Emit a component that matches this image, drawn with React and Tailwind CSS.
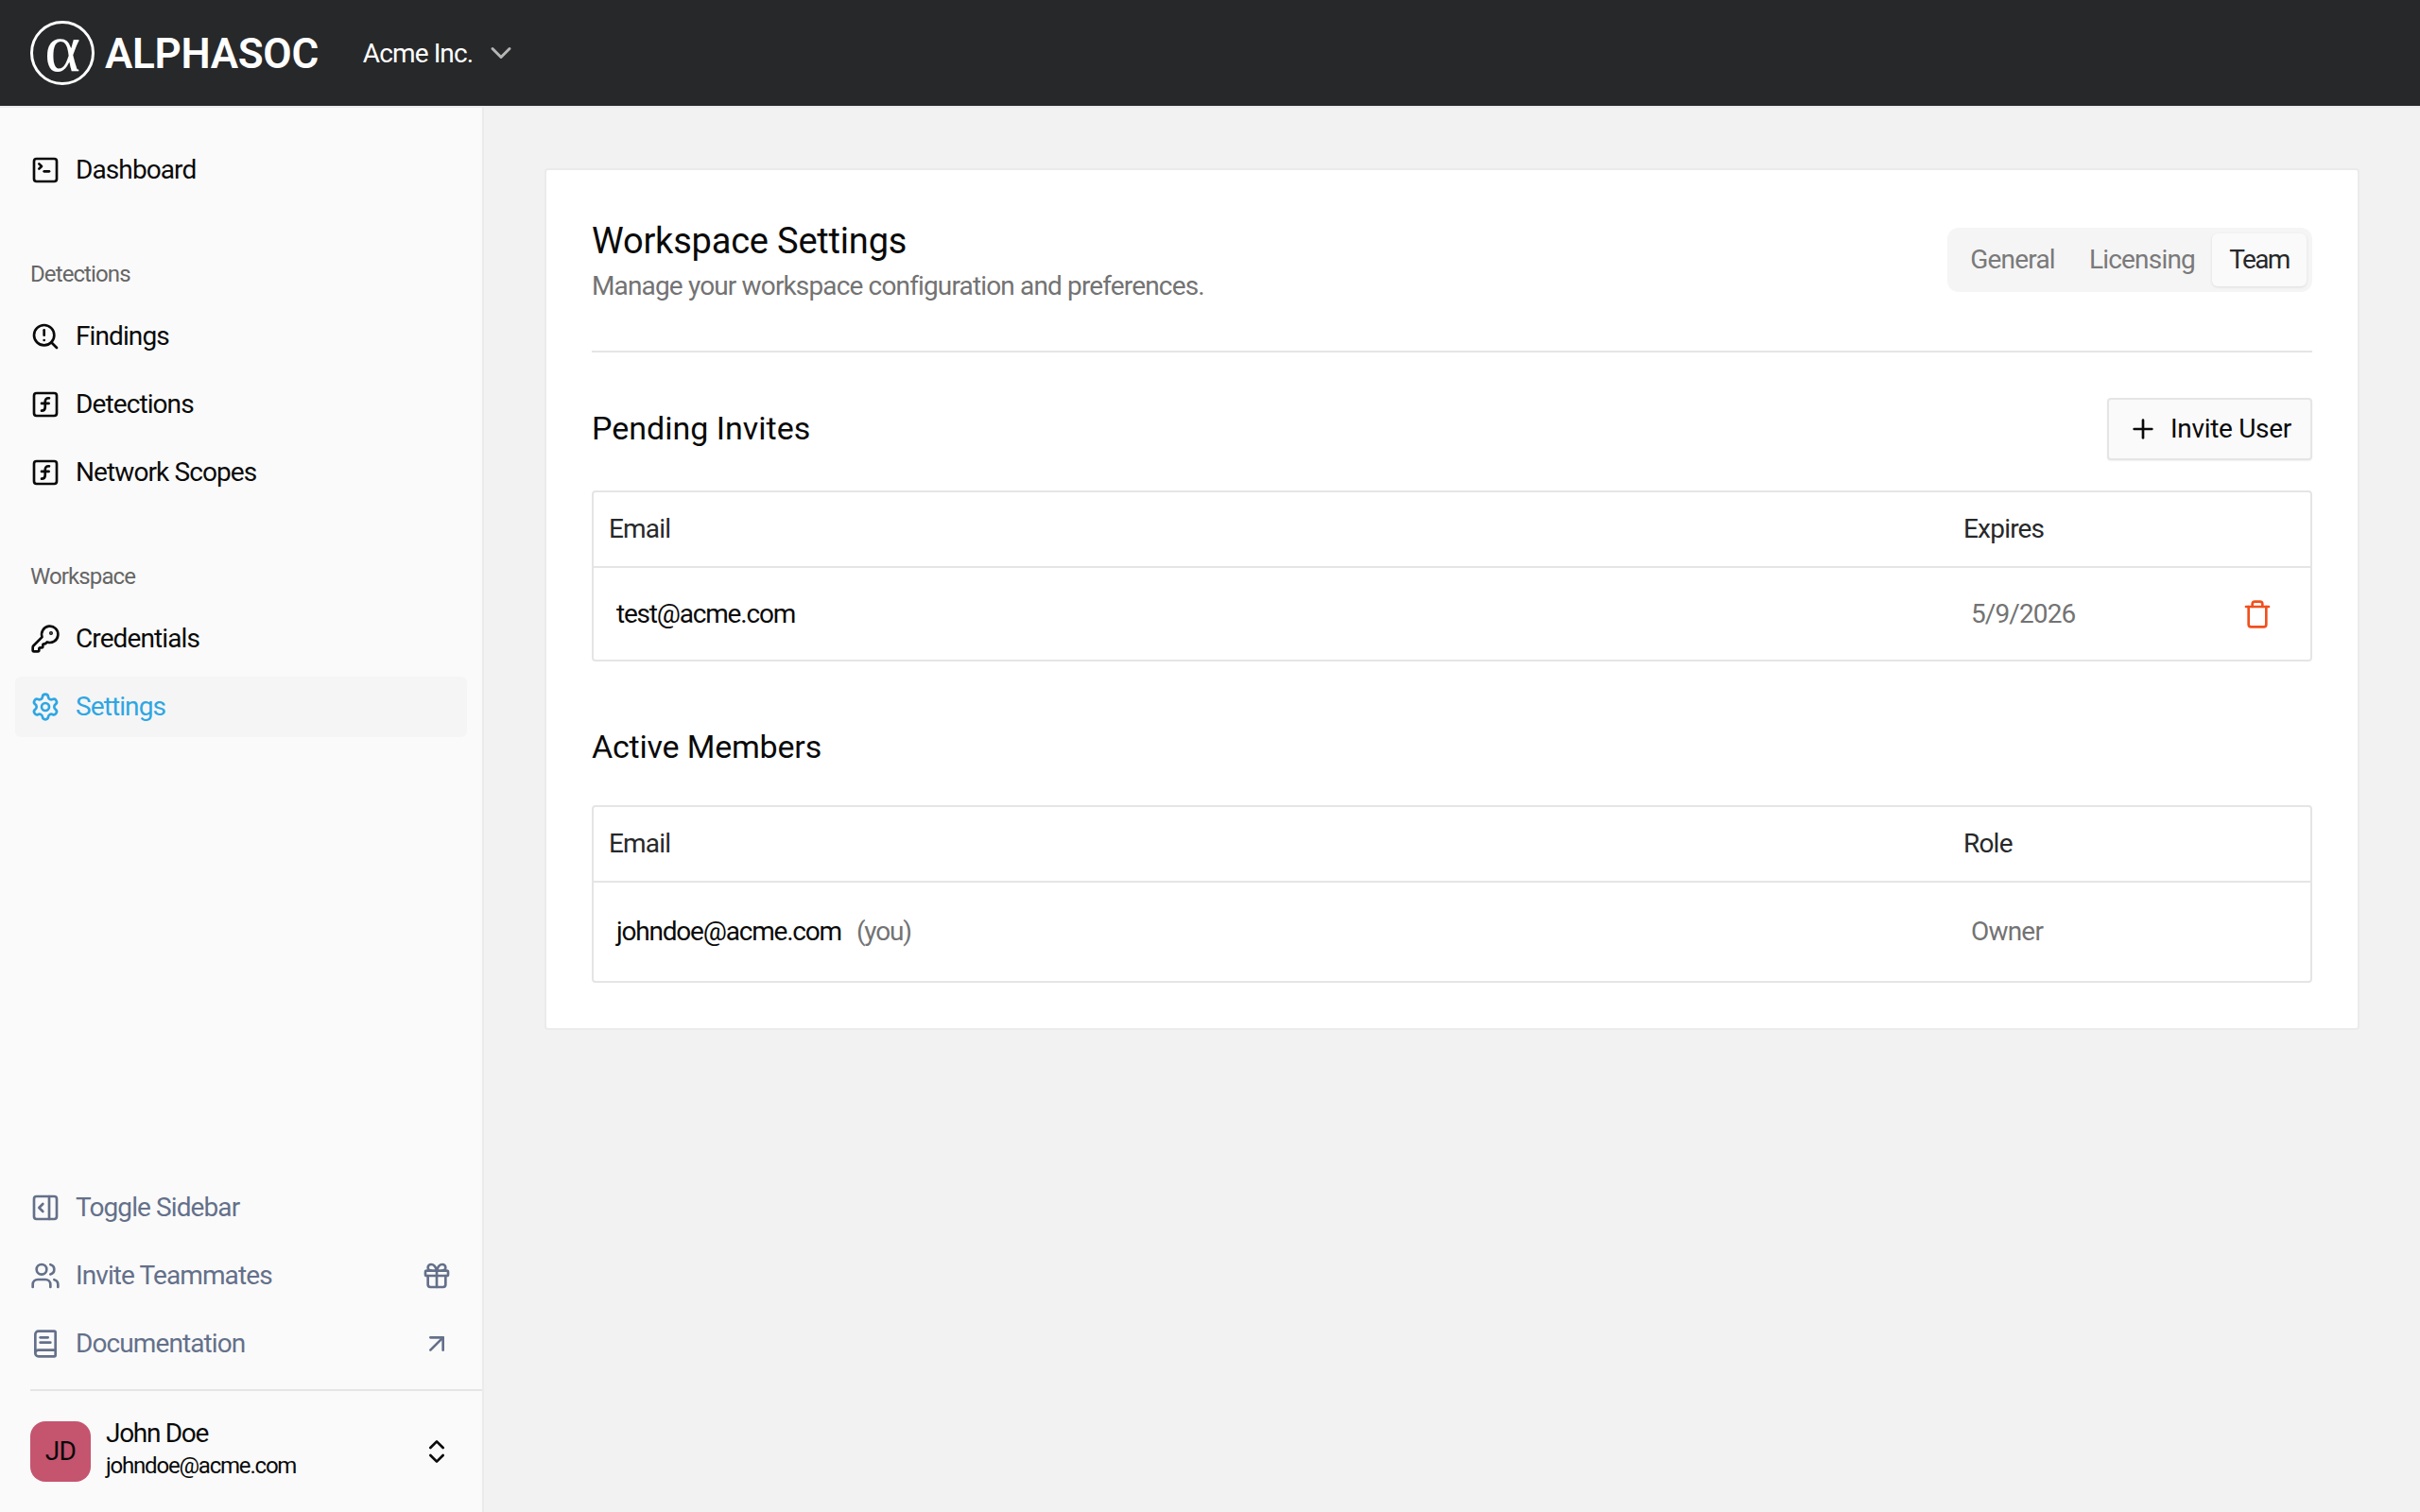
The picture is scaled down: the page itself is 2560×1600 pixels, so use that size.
import React from "react";
import {
  SquareTerminal, SquareFunction, KeyRound, Settings, PanelRightOpen, Users, Gift,
  BookText, ArrowUpRight, ChevronsUpDown, Plus, Trash, ChevronDown,
} from "lucide-react";

const font = "font-['Roboto','Liberation_Sans',sans-serif]";

function SearchAlertIcon({ className }) {
  return (
    <svg viewBox="0 0 24 24" fill="none" stroke="currentColor" strokeWidth="2" strokeLinecap="round" strokeLinejoin="round" className={className}>
      <circle cx="11" cy="11" r="8" />
      <path d="m21 21-4.3-4.3" />
      <path d="M11 7v4" />
      <path d="M11 15h.01" />
    </svg>
  );
}

function NavItem({ icon: Icon, label, active, muted, right: Right }) {
  const color = active ? "text-[#2ea6e3] bg-[#f5f5f5]" : muted ? "text-[#64708a]" : "text-[#0a0a0a]";
  return (
    <div className={`flex h-[64px] items-center gap-[16px] rounded-[6px] px-[16px] ${color}`}>
      <Icon className="h-[32px] w-[32px] shrink-0" />
      <span className="flex-1 text-[28px] leading-[40px] tracking-[-0.9px]">{label}</span>
      {Right ? <Right className="h-[32px] w-[32px] shrink-0" /> : null}
    </div>
  );
}

function SectionLabel({ children }) {
  return <div className="mb-[2px] flex h-[64px] items-center px-[16px] text-[24px] tracking-[-0.9px] text-[#666666]">{children}</div>;
}

function Sidebar() {
  return (
    <aside className="flex w-[512px] shrink-0 flex-col border-r-2 border-[#ebebeb] bg-[#fafafa]">
      <nav className="flex flex-1 flex-col px-[16px] pt-[34px]">
        <NavItem icon={SquareTerminal} label="Dashboard" />
        <div className="mt-[46px]">
          <SectionLabel>Detections</SectionLabel>
          <div className="flex flex-col gap-[8px]">
            <NavItem icon={SearchAlertIcon} label="Findings" />
            <NavItem icon={SquareFunction} label="Detections" />
            <NavItem icon={SquareFunction} label="Network Scopes" />
          </div>
        </div>
        <div className="mt-[46px]">
          <SectionLabel>Workspace</SectionLabel>
          <div className="flex flex-col gap-[8px]">
            <NavItem icon={KeyRound} label="Credentials" />
            <NavItem icon={Settings} label="Settings" active />
          </div>
        </div>
      </nav>
      <div className="flex flex-col gap-[8px] px-[16px] pb-[16px]">
        <NavItem icon={PanelRightOpen} label="Toggle Sidebar" muted />
        <NavItem icon={Users} label="Invite Teammates" muted right={Gift} />
        <NavItem icon={BookText} label="Documentation" muted right={ArrowUpRight} />
      </div>
      <div className="ml-[32px] h-[2px] bg-[#e5e5e5]" />
      <div className="flex h-[128px] items-center pl-[32px] pr-[32px]">
        <div className="flex h-[64px] w-[64px] items-center justify-center rounded-[16px] bg-[#c5546f] text-[28px] tracking-[-0.6px] text-[#0a0a0a]">JD</div>
        <div className="-mt-[5px] ml-[16px] flex-1">
          <div className="text-[28px] leading-[35px] tracking-[-1.3px] text-[#0a0a0a]">John Doe</div>
          <div className="text-[24px] leading-[34px] tracking-[-1.2px] text-[#0a0a0a]">johndoe@acme.com</div>
        </div>
        <ChevronsUpDown className="h-[32px] w-[32px] text-[#0a0a0a]" />
      </div>
    </aside>
  );
}

function Header() {
  return (
    <header className="flex h-[114px] shrink-0 items-center border-b-2 border-[#ebebeb] bg-[#27282a] pl-[32px] text-white">
      <div className="flex h-[68px] w-[68px] items-center justify-center rounded-full border-[3px] border-white font-['Liberation_Serif',serif] text-[72px] leading-none">
        <span className="-mt-[10px]">α</span>
      </div>
      <span className="ml-[11px] mt-[2px] text-[44px] font-semibold leading-none tracking-[-0.3px]">ALPHASOC</span>
      <span className="ml-[47px] mt-[1px] text-[28px] tracking-[-0.9px]">Acme Inc.</span>
      <ChevronDown className="ml-[12px] h-[36px] w-[36px] text-[#b5b5b5]" />
    </header>
  );
}

function Tabs() {
  return (
    <div className="flex h-[68px] items-center rounded-[12px] bg-[#f5f5f5] p-[6px] text-[28px] tracking-[-0.8px]">
      <div className="px-[18px] text-[#7a7a7a]">General</div>
      <div className="px-[18px] text-[#7a7a7a]">Licensing</div>
      <div className="flex h-[56px] w-[100px] items-center justify-center rounded-[6px] bg-[#fafafa] tracking-[-1.6px] text-[#27282a] shadow-[0_1px_3px_rgba(0,0,0,0.1)]">Team</div>
    </div>
  );
}

function Table({ cols, head, row, rowH }) {
  return (
    <div className="rounded-[4px] border-2 border-[#e5e5e5]">
      <div className={`grid ${cols} h-[80px] items-center border-b-2 border-[#e5e5e5] text-[28px] tracking-[-0.8px] text-[#27282a]`}>
        {head.map((h) => (
          <div key={h} className="px-[16px]">{h}</div>
        ))}
      </div>
      <div className={`grid ${cols} ${rowH} items-center text-[28px] tracking-[-1.2px]`}>{row}</div>
    </div>
  );
}

export default function App() {
  return (
    <div className={`flex h-screen flex-col overflow-hidden bg-[#f2f2f2] text-[#0a0a0a] ${font}`}>
      <Header />
      <div className="flex flex-1 overflow-hidden">
        <Sidebar />
        <main className="flex-1 p-[64px]">
          <section className="rounded-[4px] border-2 border-[#ebebeb] bg-white p-[48px]">
            <div className="flex items-center justify-between border-b-2 border-[#e5e5e5] pb-[49px]">
              <div>
                <h1 className="text-[38px] leading-[54px] tracking-[-0.2px] text-[#0a0a0a]">Workspace Settings</h1>
                <p className="mt-[2px] text-[28px] leading-[38px] tracking-[-0.85px] text-[#737373]">Manage your workspace configuration and preferences.</p>
              </div>
              <Tabs />
            </div>

            <div className="mt-[48px] flex items-center justify-between">
              <h2 className="pb-[2px] text-[34px] leading-[40px]">Pending Invites</h2>
              <button className="flex h-[66px] items-center gap-[13px] rounded-[4px] border-2 border-[#e5e5e5] bg-[#fafafa] px-[20px] text-[28px] tracking-[-0.3px] shadow-[0_1px_2px_rgba(0,0,0,0.06)]">
                <Plus className="h-[32px] w-[32px]" />
                Invite User
              </button>
            </div>
            <div className="mt-[32px]">
              <Table
                cols="grid-cols-[1fr_383px]"
                head={["Email", "Expires"]}
                rowH="h-[97px]"
                row={
                  <>
                    <div className="pl-[24px]">test@acme.com</div>
                    <div className="flex items-center justify-between pl-[24px] pr-[40px] tracking-[-0.9px] text-[#737373]">
                      <span>5/9/2026</span>
                      <Trash className="h-[32px] w-[32px] text-[#f0501e]" />
                    </div>
                  </>
                }
              />
            </div>

            <h2 className="mt-[70px] text-[34px] leading-[40px] tracking-[-0.2px]">Active Members</h2>
            <div className="mt-[42px]">
              <Table
                cols="grid-cols-[1fr_383px]"
                head={["Email", "Role"]}
                rowH="h-[104px]"
                row={
                  <>
                    <div className="flex gap-[16px] pl-[24px]">
                      <span>johndoe@acme.com</span>
                      <span className="text-[#737373]">(you)</span>
                    </div>
                    <div className="pl-[24px] tracking-[-0.8px] text-[#737373]">Owner</div>
                  </>
                }
              />
            </div>
          </section>
        </main>
      </div>
    </div>
  );
}
